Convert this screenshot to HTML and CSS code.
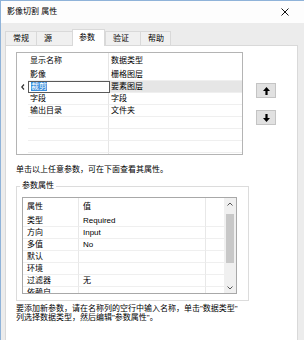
FILE: index.html
```html
<!DOCTYPE html>
<html lang="zh-CN">
<head>
<meta charset="utf-8">
<link rel="stylesheet" href="styles.css">
</head>
<body>
<div class="window">
  <div class="titlebar">
    <span class="title">影像切割 属性</span>
    <svg class="close" width="8" height="8" viewBox="0 0 8 8"><path d="M0.5 0.5L7.5 7.5M7.5 0.5L0.5 7.5" stroke="#111" stroke-width="1" fill="none"/></svg>
  </div>
  <div class="client">
    <div class="tabs">
      <div class="tab tab-general">常规</div>
      <div class="tab tab-source">源</div>
      <div class="tab tab-params selected">参数</div>
      <div class="tab tab-valid">验证</div>
      <div class="tab tab-help">帮助</div>
    </div>
    <div class="pane">
      <div class="param-row">
        <div class="listbox">
          <div class="grid">
            <div class="rh hdr"></div><div class="c1 hdr">显示名称</div><div class="c2 hdr">数据类型</div>
            <div class="rh"></div><div class="c1">影像</div><div class="c2">栅格图层</div>
            <div class="rh"><svg width="4" height="6" viewBox="0 0 4 6"><path d="M3 0.5L0.8 3L3 5.5" stroke="#333" stroke-width="1.2" fill="none"/></svg></div><div class="c1 editing"><span class="editbox"><span class="sel">裁剪</span></span></div><div class="c2 cur">要素图层</div>
            <div class="rh"></div><div class="c1">字段</div><div class="c2">字段</div>
            <div class="rh"></div><div class="c1">输出目录</div><div class="c2">文件夹</div>
            <div class="rh"></div><div class="c1"></div><div class="c2"></div>
            <div class="rh"></div><div class="c1"></div><div class="c2"></div>
            <div class="rh"></div><div class="c1"></div><div class="c2"></div>
            <div class="rh"></div><div class="c1"></div><div class="c2"></div>
          </div>
        </div>
        <div class="movebtns">
          <div class="btn"><svg width="7" height="8" viewBox="0 0 7 8"><polygon points="3.5,0 7,4 4.6,4 4.6,8 2.4,8 2.4,4 0,4" fill="#000"/></svg></div>
          <div class="btn"><svg width="7" height="8" viewBox="0 0 7 8"><polygon points="3.5,8 7,4 4.6,4 4.6,0 2.4,0 2.4,4 0,4" fill="#000"/></svg></div>
        </div>
      </div>
      <p class="hint">单击以上任意参数，可在下面查看其属性。</p>
      <fieldset class="group">
        <legend>参数属性</legend>
        <div class="proptable">
          <div class="pgrid">
            <div class="p1 hdr">属性</div><div class="p2 hdr">值</div><div class="p3 hdr"></div>
            <div class="p1">类型</div><div class="p2">Required</div><div class="p3"></div>
            <div class="p1">方向</div><div class="p2">Input</div><div class="p3"></div>
            <div class="p1">多值</div><div class="p2">No</div><div class="p3"></div>
            <div class="p1">默认</div><div class="p2"></div><div class="p3"></div>
            <div class="p1">环境</div><div class="p2"></div><div class="p3"></div>
            <div class="p1">过滤器</div><div class="p2">无</div><div class="p3"></div>
            <div class="p1">依赖自</div><div class="p2"></div><div class="p3"></div>
          </div>
          <div class="vscroll">
            <div class="sarrow"><svg width="6" height="4" viewBox="0 0 6 4"><path d="M0.5 3.5L3 1L5.5 3.5" stroke="#555" stroke-width="1" fill="none"/></svg></div>
            <div class="strack"><div class="thumb"></div></div>
            <div class="sarrow"><svg width="6" height="4" viewBox="0 0 6 4"><path d="M0.5 0.5L3 3L5.5 0.5" stroke="#555" stroke-width="1" fill="none"/></svg></div>
          </div>
        </div>
      </fieldset>
      <p class="note">要添加新参数，请在名称列的空行中输入名称，单击"数据类型"<br>列选择数据类型，然后编辑"参数属性"。</p>
    </div>
  </div>
</div>
</body>
</html>
```
FILE: styles.css
```css
* { box-sizing: border-box; }
html, body { margin: 0; padding: 0; }
body {
  width: 304px;
  height: 340px;
  overflow: hidden;
  font-family: "Liberation Sans", "Noto Sans CJK SC", sans-serif;
  font-size: 8px;
  color: #000;
  background: #f0f0f0;
}
.window {
  width: 304px;
  height: 340px;
  display: flex;
  flex-direction: column;
  border-top: 1px solid #8fb3d9;
  border-left: 1px solid #8fb3d9;
  background: #f0f0f0;
  overflow: hidden;
}
.titlebar {
  height: 22px;
  flex: none;
  background: #fdfdfd;
  display: flex;
  align-items: center;
  justify-content: space-between;
  padding: 0 15px 0 6px;
}
.title { line-height: 10px; }
.close { display: block; }
.client {
  flex: 1;
  display: flex;
  flex-direction: column;
  padding: 6px 6px 0 4px;
  background: #ececec;
}
.tabs {
  height: 16px;
  display: flex;
  align-items: flex-end;
  flex: none;
}
.tab {
  height: 14px;
  line-height: 13px;
  padding-left: 7px;
  border: 1px solid #d9d9d9;
  border-bottom: none;
  border-right: none;
  background: #f0f0f0;
}
.tab-general { width: 31px; }
.tab-source { width: 36px; }
.tab-params { width: 33px; }
.tab-valid { width: 35px; }
.tab-help { width: 31px; border-right: 1px solid #d9d9d9; }
.tab.selected {
  height: 17px;
  line-height: 15px;
  padding-left: 6px;
  margin-bottom: -1px;
  background: #fff;
  border-right: 1px solid #d9d9d9;
  position: relative;
  z-index: 1;
}
.pane {
  flex: 1;
  background: #fff;
  border: 1px solid #d9d9d9;
  border-bottom: none;
  padding: 6px 0 0 10px;
}
.param-row {
  display: flex;
}
.listbox {
  width: 227px;
  height: 103px;
  border: 1px solid #b4b4b4;
  overflow: hidden;
  background: #fff;
}
.grid {
  display: grid;
  grid-template-columns: 11px 80px 1fr;
  grid-template-rows: 16px;
  grid-auto-rows: 12px;
}
.grid > div {
  line-height: 11px;
  white-space: nowrap;
  overflow: hidden;
}
.grid .hdr { line-height: 16px; }
.c1, .c2 { border-bottom: 1px solid #efefef; padding-left: 2px; }
.c2 { border-left: 1px solid #e6e6e6; }
.c1.hdr, .c2.hdr { border-bottom: none; }
.rh { display: flex; align-items: center; justify-content: center; }
.c1.editing { padding: 0; overflow: visible !important; }
.editbox {
  display: block;
  width: 82px;
  height: 12px;
  border: 1px solid #5a5a5a;
  background: #fff;
  padding-left: 2px;
  line-height: 10px;
  position: relative;
  z-index: 1;
}
.sel { background: #3a8fde; color: #fff; }
.c2.cur { background: #e6e6e6; }
.movebtns {
  display: flex;
  flex-direction: column;
  gap: 12px;
  margin-left: 13px;
  padding-top: 31px;
}
.btn {
  width: 20px;
  height: 15px;
  background: #e1e1e1;
  border: 1px solid #c4c4c4;
  display: flex;
  align-items: center;
  justify-content: center;
}
.hint {
  margin: 9px 0 0 0;
  line-height: 12px;
  white-space: nowrap;
}
.group {
  width: 233px;
  margin: 5px 0 0 0;
  padding: 6px 11px 6px 5px;
  border: 1px solid #dcdcdc;
  min-inline-size: 0;
}
.group legend {
  padding: 0 2px;
  margin-left: -2px;
  line-height: 10px;
}
.proptable {
  width: 215px;
  height: 97px;
  border: 1px solid #a8a8a8;
  display: flex;
  overflow: hidden;
  background: #fff;
}
.pgrid {
  width: 201px;
  display: grid;
  grid-template-columns: 55px 127px 1fr;
  grid-template-rows: 17px;
  grid-auto-rows: 12px;
  align-content: start;
}
.pgrid > div {
  line-height: 11px;
  padding-left: 4px;
  white-space: nowrap;
  border-bottom: 1px solid #efefef;
}
.pgrid .hdr { line-height: 17px; border-bottom: none; }
.p2, .p3 { border-left: 1px solid #e8e8e8; }
.vscroll {
  width: 12px;
  background: #f0f0f0;
  display: flex;
  flex-direction: column;
}
.sarrow {
  height: 11px;
  display: flex;
  align-items: center;
  justify-content: center;
}
.strack {
  flex: 1;
  padding: 5px 2px 0 2px;
}
.thumb {
  height: 49px;
  background: #c8c8c8;
}
.note {
  margin: 3px 0 0 0;
  line-height: 9px;
  white-space: nowrap;
}
```
